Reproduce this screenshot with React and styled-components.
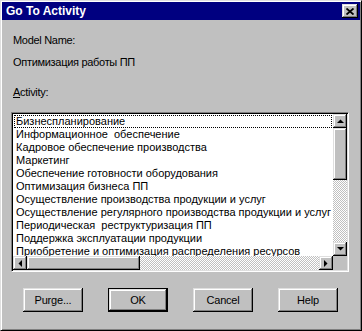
import React from 'react'
import styled, { createGlobalStyle, css } from 'styled-components'

const GlobalStyle = createGlobalStyle`
  body {
    margin: 0;
    background: #c0c0c0;
  }
`

const raised = css`
  background: #c0c0c0;
  box-shadow: inset -1px -1px #000, inset 1px 1px #dfdfdf,
    inset -2px -2px #808080, inset 2px 2px #fff;
`

const Window = styled.div`
  box-sizing: border-box;
  width: 362px;
  height: 331px;
  background: #c0c0c0;
  border: 1px solid;
  border-color: #dfdfdf #000 #000 #dfdfdf;
  box-shadow: inset 1px 1px #fff, inset -1px -1px #808080;
  padding: 1px;
  display: flex;
  flex-direction: column;
  font-family: 'Liberation Sans', Arial, sans-serif;
  font-size: 11px;
  color: #000;
`

const TitleBar = styled.div`
  height: 18px;
  background: #000080;
  display: flex;
  align-items: center;
  justify-content: space-between;
  padding: 0 2px 0 4px;
  color: #fff;
  font-weight: bold;
  font-size: 12px;
`

const CloseButton = styled.div`
  ${raised};
  width: 16px;
  height: 14px;
  display: flex;
  align-items: center;
  justify-content: center;
`

const Body = styled.div`
  display: flex;
  flex-direction: column;
  padding: 14px 0 0 9px;
`

const Label = styled.div`
  margin-left: 2px;
  line-height: 13px;
  height: 13px;
  margin-bottom: ${p => p.$gap}px;
  letter-spacing: -0.3px;
`

const ListBox = styled.div`
  box-sizing: border-box;
  width: 338px;
  height: 160px;
  border: 1px solid;
  border-color: #808080 #fff #fff #808080;
  box-shadow: inset 1px 1px #000, inset -1px -1px #dfdfdf;
  padding: 1px;
  background: #fff;
  display: grid;
  grid-template-columns: 1fr 14px;
  grid-template-rows: 1fr 14px;
`

const Items = styled.div`
  overflow: hidden;
  padding-top: 1px;
  font-size: 11px;
  line-height: 13px;
`

const Item = styled.div`
  white-space: pre;
  padding-left: 2px;
  margin: 0 1px;
  height: 13px;
  outline: ${p => (p.$focused ? '1px dotted #000' : 'none')};
  outline-offset: -1px;
`

const VScroll = styled.div`
  display: flex;
  flex-direction: column;
`

const HScroll = styled.div`
  display: flex;
`

const Track = styled.div`
  flex: 1;
  background: repeating-conic-gradient(#c0c0c0 0 25%, #fff 0 50%) 0 0 / 2px 2px;
`

const ArrowButton = styled.div`
  ${raised};
  width: 14px;
  height: 14px;
  flex: none;
  display: flex;
  align-items: center;
  justify-content: center;
`

const Thumb = styled.div`
  ${raised};
  flex: none;
  width: ${p => p.$w || 14}px;
  height: ${p => p.$h || 14}px;
`

const Corner = styled.div`
  background: #c0c0c0;
`

const ButtonRow = styled.div`
  display: flex;
  gap: 25px;
  padding: 16px 0 0 12px;
`

const Button = styled.div`
  ${raised};
  box-sizing: border-box;
  width: 60px;
  height: 24px;
  display: flex;
  align-items: center;
  justify-content: center;
  letter-spacing: -0.2px;
  ${p =>
    p.$default &&
    css`
      border: 1px solid #000;
    `}
`

const Arrow = ({ dir }) => {
  const pts = {
    up: '0,4 7,4 3.5,0.5',
    down: '0,0 7,0 3.5,3.5',
    left: '4,0 4,7 0.5,3.5',
    right: '0,0 0,7 3.5,3.5',
  }[dir]
  const vertical = dir === 'up' || dir === 'down'
  return (
    <svg width={vertical ? 7 : 4} height={vertical ? 4 : 7}>
      <polygon points={pts} fill="#000" />
    </svg>
  )
}

const activities = [
  'Бизнеспланирование',
  'Информационное  обеспечение',
  'Кадровое обеспечение производства',
  'Маркетинг',
  'Обеспечение готовности оборудования',
  'Оптимизация бизнеса ПП',
  'Осуществление производства продукции и услуг',
  'Осуществление регулярного производства продукции и услуг',
  'Периодическая  реструктуризация ПП',
  'Поддержка эксплуатации продукции',
  'Приобретение и оптимизация распределения ресурсов',
]

export default function App() {
  return (
    <>
      <GlobalStyle />
      <Window>
        <TitleBar>
          <span>Go To Activity</span>
          <CloseButton>
            <svg width="8" height="7" viewBox="0 0 8 7">
              <path d="M0.5 0.5 L7.5 6.5 M7.5 0.5 L0.5 6.5" stroke="#000" strokeWidth="1.8" />
            </svg>
          </CloseButton>
        </TitleBar>
        <Body>
          <Label $gap={9}>Model Name:</Label>
          <Label $gap={17}>Оптимизация работы ПП</Label>
          <Label $gap={13}>
            <u>A</u>ctivity:
          </Label>
          <ListBox>
            <Items>
              {activities.map((a, i) => (
                <Item key={a} $focused={i === 0}>
                  {a}
                </Item>
              ))}
            </Items>
            <VScroll>
              <ArrowButton>
                <Arrow dir="up" />
              </ArrowButton>
              <Thumb $h={52} />
              <Track />
              <ArrowButton>
                <Arrow dir="down" />
              </ArrowButton>
            </VScroll>
            <HScroll>
              <ArrowButton>
                <Arrow dir="left" />
              </ArrowButton>
              <Thumb $w={113} />
              <Track />
              <ArrowButton>
                <Arrow dir="right" />
              </ArrowButton>
            </HScroll>
            <Corner />
          </ListBox>
          <ButtonRow>
            <Button>Purge...</Button>
            <Button $default>OK</Button>
            <Button>Cancel</Button>
            <Button>Help</Button>
          </ButtonRow>
        </Body>
      </Window>
    </>
  )
}
